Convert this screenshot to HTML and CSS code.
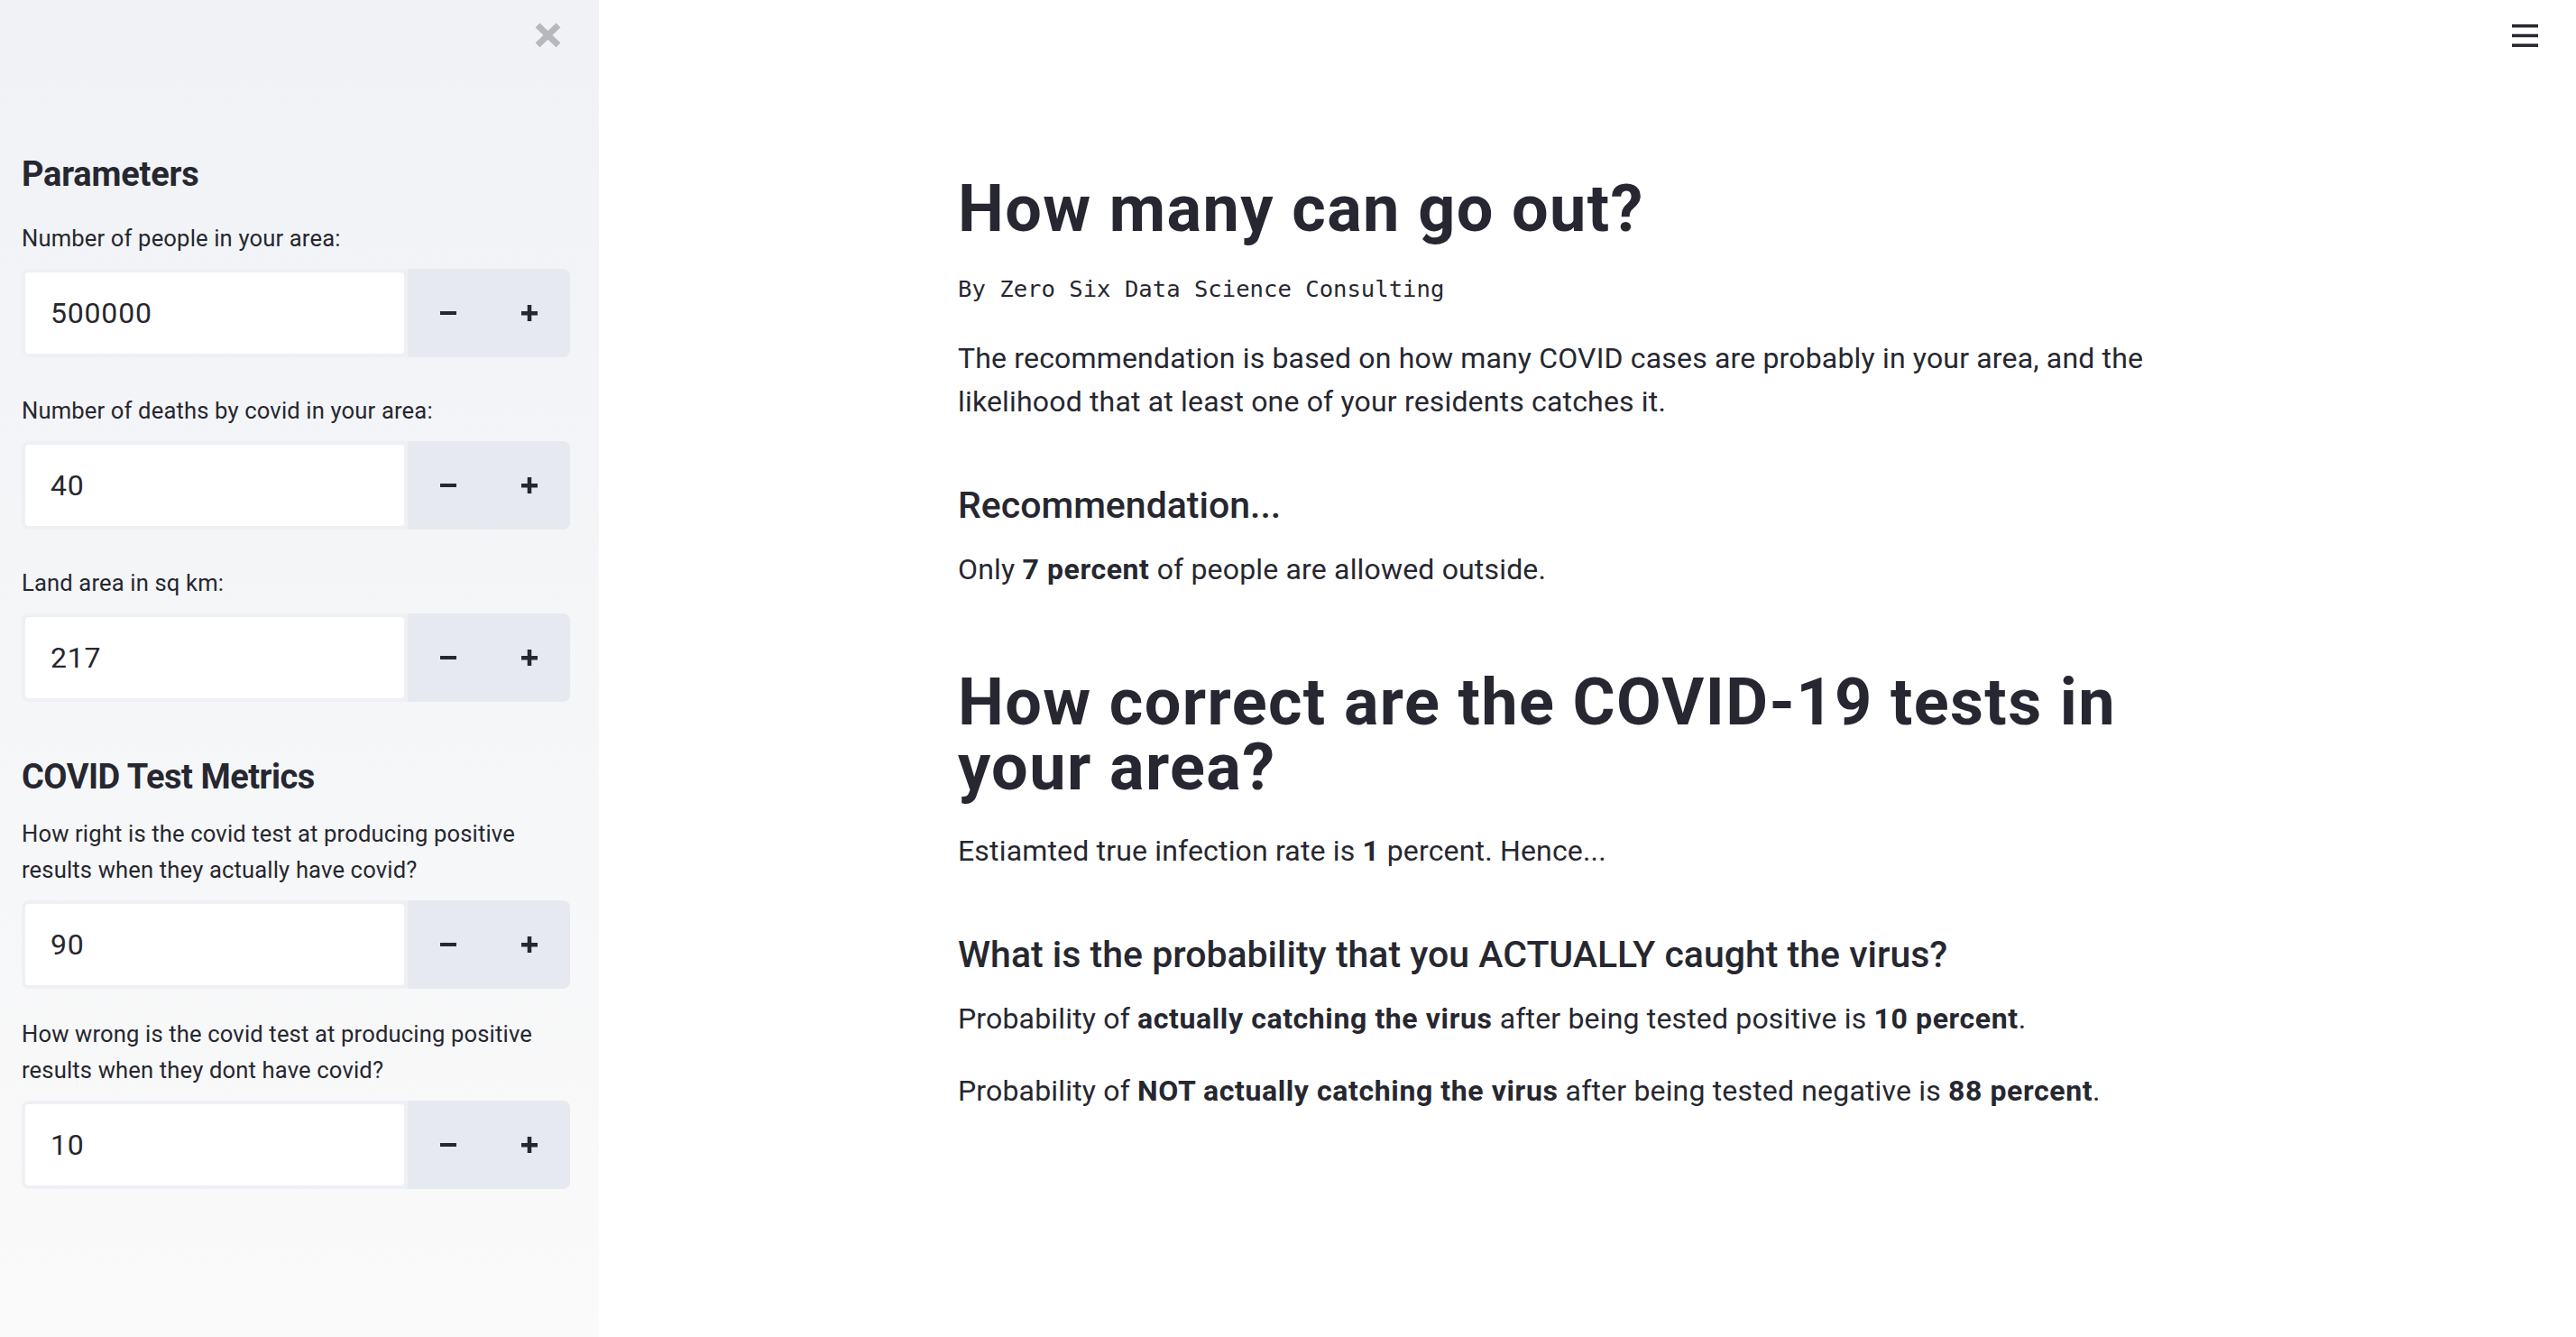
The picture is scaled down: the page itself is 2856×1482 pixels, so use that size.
FILE: index.html
```html
<!DOCTYPE html>
<html lang="en">
<head>
<meta charset="utf-8">
<title>How many can go out?</title>
<link rel="stylesheet" href="styles.css">
</head>
<body>
<div class="app">
  <aside class="sidebar">
    <div class="sb-header">
      <button class="close-btn" aria-label="Close sidebar">
        <svg width="29" height="28" viewBox="0 0 29 28"><path d="M3 3 L26 25 M26 3 L3 25" stroke="#b7b8bd" stroke-width="7" stroke-linecap="butt" fill="none"/></svg>
      </button>
    </div>
    <div class="sb-content">
      <h2 class="sb-title first">Parameters</h2>
      <div class="widget after-title">
        <label class="w-label">Number of people in your area:</label>
        <div class="num">
          <div class="num-input">500000</div>
          <div class="num-btns">
            <span class="step"><svg width="18" height="4" viewBox="0 0 18 4"><rect width="18" height="4" fill="#262730"/></svg></span>
            <span class="step"><svg width="18" height="18" viewBox="0 0 18 18"><rect x="0" y="7" width="18" height="4.5" fill="#262730"/><rect x="6.75" y="0" width="4.5" height="18" fill="#262730"/></svg></span>
          </div>
        </div>
      </div>
      <div class="widget">
        <label class="w-label">Number of deaths by covid in your area:</label>
        <div class="num">
          <div class="num-input">40</div>
          <div class="num-btns">
            <span class="step"><svg width="18" height="4" viewBox="0 0 18 4"><rect width="18" height="4" fill="#262730"/></svg></span>
            <span class="step"><svg width="18" height="18" viewBox="0 0 18 18"><rect x="0" y="7" width="18" height="4.5" fill="#262730"/><rect x="6.75" y="0" width="4.5" height="18" fill="#262730"/></svg></span>
          </div>
        </div>
      </div>
      <div class="widget">
        <label class="w-label">Land area in sq km:</label>
        <div class="num">
          <div class="num-input">217</div>
          <div class="num-btns">
            <span class="step"><svg width="18" height="4" viewBox="0 0 18 4"><rect width="18" height="4" fill="#262730"/></svg></span>
            <span class="step"><svg width="18" height="18" viewBox="0 0 18 18"><rect x="0" y="7" width="18" height="4.5" fill="#262730"/><rect x="6.75" y="0" width="4.5" height="18" fill="#262730"/></svg></span>
          </div>
        </div>
      </div>
      <h2 class="sb-title second">COVID Test Metrics</h2>
      <div class="widget tight">
        <label class="w-label">How right is the covid test at producing positive results when they actually have covid?</label>
        <div class="num">
          <div class="num-input">90</div>
          <div class="num-btns">
            <span class="step"><svg width="18" height="4" viewBox="0 0 18 4"><rect width="18" height="4" fill="#262730"/></svg></span>
            <span class="step"><svg width="18" height="18" viewBox="0 0 18 18"><rect x="0" y="7" width="18" height="4.5" fill="#262730"/><rect x="6.75" y="0" width="4.5" height="18" fill="#262730"/></svg></span>
          </div>
        </div>
      </div>
      <div class="widget last">
        <label class="w-label">How wrong is the covid test at producing positive results when they dont have covid?</label>
        <div class="num">
          <div class="num-input">10</div>
          <div class="num-btns">
            <span class="step"><svg width="18" height="4" viewBox="0 0 18 4"><rect width="18" height="4" fill="#262730"/></svg></span>
            <span class="step"><svg width="18" height="18" viewBox="0 0 18 18"><rect x="0" y="7" width="18" height="4.5" fill="#262730"/><rect x="6.75" y="0" width="4.5" height="18" fill="#262730"/></svg></span>
          </div>
        </div>
      </div>
    </div>
  </aside>
  <main class="main">
    <div class="topbar">
      <button class="menu-btn" aria-label="Menu">
        <svg width="30" height="26" viewBox="0 0 30 26"><path d="M0 1.75 H29 M0 12.5 H29 M0 23.25 H29" stroke="#262730" stroke-width="3.5" fill="none"/></svg>
      </button>
    </div>
    <div class="block">
      <h1 class="h1 top">How many can go out?</h1>
      <p class="mono">By Zero Six Data Science Consulting</p>
      <p class="text">The recommendation is based on how many COVID cases are probably in your area, and the likelihood that at least one of your residents catches it.</p>
      <h3 class="h3">Recommendation...</h3>
      <p class="text">Only <strong>7 percent</strong> of people are allowed outside.</p>
      <h1 class="h1 later">How correct are the COVID-19 tests in your area?</h1>
      <p class="text">Estiamted true infection rate is <strong>1</strong> percent. Hence...</p>
      <h3 class="h3">What is the probability that you ACTUALLY caught the virus?</h3>
      <p class="text">Probability of <strong>actually catching the virus</strong> after being tested positive is <strong>10 percent</strong>.</p>
      <p class="text">Probability of <strong>NOT actually catching the virus</strong> after being tested negative is <strong>88 percent</strong>.</p>
    </div>
  </main>
</div>
</body>
</html>
```

FILE: styles.css
```css
* { box-sizing: border-box; }
html, body {
  margin: 0;
  padding: 0;
  height: 100%;
}
body {
  font-family: Roboto, "Noto Sans", "Liberation Sans", sans-serif;
  color: #262730;
  background: #ffffff;
}
.app {
  display: flex;
  min-height: 1482px;
}

/* Sidebar */
.sidebar {
  width: 664px;
  flex: 0 0 664px;
  background: linear-gradient(180deg, #f0f2f6 0%, #fafafa 100%);
  display: flex;
  flex-direction: column;
}
.sb-header {
  display: flex;
  justify-content: flex-end;
  padding: 25px 42px 0 0;
}
.close-btn {
  border: 0;
  background: transparent;
  padding: 0;
  width: 29px;
  height: 28px;
  display: block;
}
.close-btn svg { display: block; }
.sb-content {
  padding: 0 32px 0 24px;
}
.sb-title {
  font-size: 38px;
  line-height: 46px;
  font-weight: 700;
  margin: 0;
  letter-spacing: -0.2px;
}
.sb-title.first { margin-top: 117px; }
.sb-title.second { margin-top: 60px; letter-spacing: -0.5px; }
.widget { margin-top: 39px; }
.widget.after-title { margin-top: 28px; }
.widget.tight { margin-top: 20px; }
.widget.last { margin-top: 30px; }
.w-label {
  display: block;
  font-size: 25.6px;
  line-height: 40px;
  letter-spacing: 0.15px;
  margin-bottom: 14px;
}
.num {
  display: flex;
  height: 98px;
  background: #eef0f4;
  border-radius: 8px;
}
.num-input {
  flex: 1;
  margin: 4px;
  background: #ffffff;
  border-radius: 4px;
  font-size: 32px;
  line-height: 90px;
  letter-spacing: 0.8px;
  padding-left: 28px;
}
.num-btns {
  display: flex;
  width: 180px;
  background: #e6e9ef;
  border-radius: 0 8px 8px 0;
}
.step {
  flex: 1;
  display: flex;
  align-items: center;
  justify-content: center;
}
.step svg { display: block; }

/* Main */
.main {
  flex: 1;
  display: flex;
  flex-direction: column;
}
.topbar {
  display: flex;
  justify-content: flex-end;
  height: 80px;
  padding: 27px 41px 0 0;
}
.menu-btn {
  border: 0;
  background: transparent;
  padding: 0;
  width: 30px;
  height: 26px;
}
.menu-btn svg { display: block; }
.block {
  width: 1396px;
  margin: 0 auto;
  padding-top: 116px;
}
.h1 {
  font-size: 72px;
  line-height: 72px;
  font-weight: 700;
  margin: 0 0 32px 0;
  letter-spacing: 1.4px;
}
.h1.later { margin-top: 88px; }
.mono {
  font-family: "DejaVu Sans Mono", "Liberation Mono", monospace;
  font-size: 25.6px;
  line-height: 41px;
  margin: 0 0 32px 0;
}
.text {
  font-size: 32px;
  line-height: 48px;
  letter-spacing: 0.17px;
  margin: 0 0 32px 0;
}
.text strong { font-weight: 700; letter-spacing: 0.6px; }
.h3 {
  font-size: 41px;
  line-height: 48px;
  font-weight: 500;
  letter-spacing: 0;
  margin: 67px 0 23px 0;
}
```
